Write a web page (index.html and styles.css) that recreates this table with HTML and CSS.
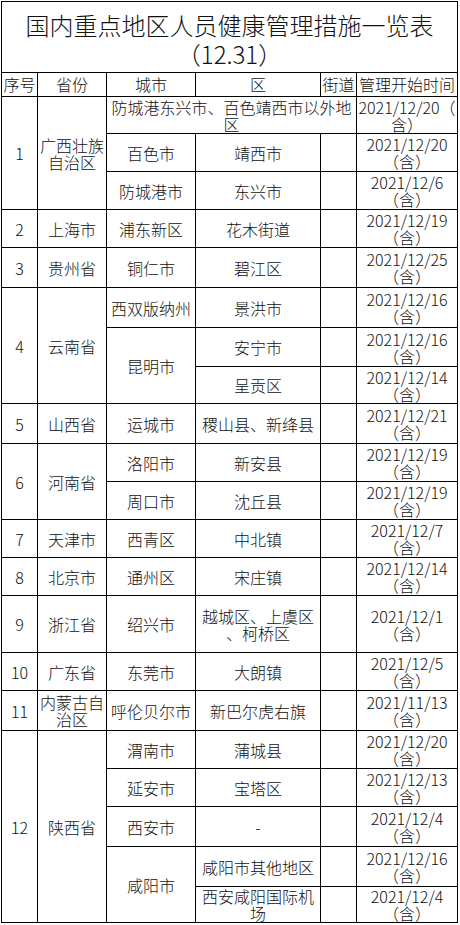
FILE: index.html
```html
<!DOCTYPE html>
<html lang="zh-CN">
<head>
<meta charset="utf-8">
<title>国内重点地区人员健康管理措施一览表</title>
<link rel="stylesheet" href="styles.css">
</head>
<body>
<table class="sheet">
  <colgroup>
    <col class="c-no"><col class="c-prov"><col class="c-city"><col class="c-dist"><col class="c-street"><col class="c-date">
  </colgroup>
  <tbody>
    <tr class="h71"><td class="title" colspan="6">国内重点地区人员健康管理措施一览表<br>（12.31）</td></tr>
    <tr class="h24 head"><td>序号</td><td>省份</td><td>城市</td><td>区</td><td>街道</td><td>管理开始时间</td></tr>

    <tr class="h37"><td rowspan="3">1</td><td rowspan="3">广西壮族<br>自治区</td><td colspan="3">防城港东兴市、百色靖西市以外地<br>区</td><td>2021/12/20（<br>含）</td></tr>
    <tr class="h38"><td>百色市</td><td>靖西市</td><td></td><td>2021/12/20<br>（含）</td></tr>
    <tr class="h38"><td>防城港市</td><td>东兴市</td><td></td><td>2021/12/6<br>（含）</td></tr>

    <tr class="h38"><td>2</td><td>上海市</td><td>浦东新区</td><td>花木街道</td><td></td><td>2021/12/19<br>（含）</td></tr>
    <tr class="h40"><td>3</td><td>贵州省</td><td>铜仁市</td><td>碧江区</td><td></td><td>2021/12/25<br>（含）</td></tr>

    <tr class="h40"><td rowspan="3">4</td><td rowspan="3">云南省</td><td>西双版纳州</td><td>景洪市</td><td></td><td>2021/12/16<br>（含）</td></tr>
    <tr class="h39"><td rowspan="2">昆明市</td><td>安宁市</td><td></td><td>2021/12/16<br>（含）</td></tr>
    <tr class="h37"><td>呈贡区</td><td></td><td>2021/12/14<br>（含）</td></tr>

    <tr class="h40"><td>5</td><td>山西省</td><td>运城市</td><td>稷山县、新绛县</td><td></td><td>2021/12/21<br>（含）</td></tr>

    <tr class="h38"><td rowspan="2">6</td><td rowspan="2">河南省</td><td>洛阳市</td><td>新安县</td><td></td><td>2021/12/19<br>（含）</td></tr>
    <tr class="h38"><td>周口市</td><td>沈丘县</td><td></td><td>2021/12/19<br>（含）</td></tr>

    <tr class="h38"><td>7</td><td>天津市</td><td>西青区</td><td>中北镇</td><td></td><td>2021/12/7<br>（含）</td></tr>
    <tr class="h38"><td>8</td><td>北京市</td><td>通州区</td><td>宋庄镇</td><td></td><td>2021/12/14<br>（含）</td></tr>
    <tr class="h57"><td>9</td><td>浙江省</td><td>绍兴市</td><td>越城区、上虞区<br>、柯桥区</td><td></td><td>2021/12/1<br>（含）</td></tr>
    <tr class="h38"><td>10</td><td>广东省</td><td>东莞市</td><td>大朗镇</td><td></td><td>2021/12/5<br>（含）</td></tr>
    <tr class="h40"><td>11</td><td>内蒙古自<br>治区</td><td>呼伦贝尔市</td><td>新巴尔虎右旗</td><td></td><td>2021/11/13<br>（含）</td></tr>

    <tr class="h38"><td rowspan="6">12</td><td rowspan="6">陕西省</td><td>渭南市</td><td>蒲城县</td><td></td><td>2021/12/20<br>（含）</td></tr>
    <tr class="h38"><td>延安市</td><td>宝塔区</td><td></td><td>2021/12/13<br>（含）</td></tr>
    <tr class="h40"><td>西安市</td><td>-</td><td></td><td>2021/12/4<br>（含）</td></tr>
    <tr class="h40"><td rowspan="2">咸阳市</td><td>咸阳市其他地区</td><td></td><td>2021/12/16<br>（含）</td></tr>
    <tr class="h36"><td>西安咸阳国际机<br>场</td><td></td><td>2021/12/4<br>（含）</td></tr>
  </tbody>
</table>
</body>
</html>
```

FILE: styles.css
```css
html, body {
  margin: 0;
  padding: 0;
  background: #fff;
}

body {
  padding: 1px 0 0 1px;
  font-family: "Noto Sans CJK SC", "Noto Sans", sans-serif;
  font-weight: 300;
  color: #111;
}

.sheet {
  border-collapse: collapse;
  table-layout: fixed;
  width: 457px;
  font-size: 16px;
  line-height: 17px;
}

.c-no { width: 36px; }
.c-prov { width: 69px; }
.c-city { width: 89px; }
.c-dist { width: 125px; }
.c-street { width: 36px; }
.c-date { width: 101px; }

.sheet td {
  border: 1px solid #000;
  padding: 1px 0 0 0;
  text-align: center;
  vertical-align: middle;
  white-space: nowrap;
}

.sheet .title {
  font-size: 24px;
  line-height: 29px;
  padding-top: 4px;
}

.h71 { height: 71px; }
.h24 { height: 24px; }
.h36 { height: 36px; }
.h37 { height: 37px; }
.h38 { height: 38px; }
.h39 { height: 39px; }
.h40 { height: 40px; }
.h57 { height: 57px; }

.head td {
  padding-top: 0;
}
```
